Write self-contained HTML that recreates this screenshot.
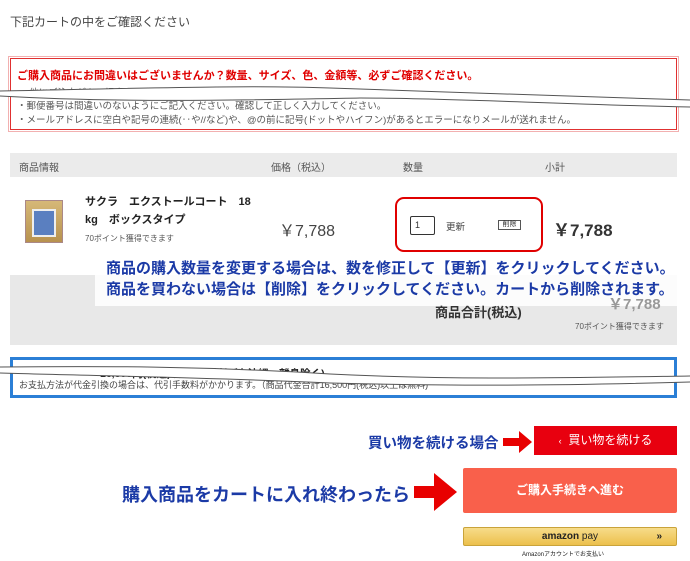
<!DOCTYPE html>
<html><head><meta charset="utf-8">
<style>
*{margin:0;padding:0;box-sizing:border-box}
body{width:690px;height:561px;background:#fff;position:relative;overflow:hidden;font-family:"Liberation Sans","Noto Sans CJK JP",sans-serif;color:#333}
.a{position:absolute;white-space:nowrap}
.blue{color:#1b3aa6;font-weight:bold}
</style></head><body>
<div class="a" style="left:10px;top:13px;font-size:12px;color:#444">下記カートの中をご確認ください</div>

<div class="a" style="left:10px;top:58px;width:667px;height:72px;border:1px solid #e03030;outline:1px solid #f2b0b0;outline-offset:1px"></div>
<div class="a" style="left:17px;top:67px;font-size:11px;font-weight:bold;color:#e00000">ご購入商品にお間違いはございませんか？数量、サイズ、色、金額等、必ずご確認ください。</div>
<div class="a" style="left:17px;top:85px;font-size:9.5px;color:#555">・ 他にご注文がある場合は<b style="color:#222">[買い物を続ける]</b>ボタンをクリックしてください。</div>
<div class="a" style="left:17px;top:98px;font-size:9.5px;color:#555">・郵便番号は間違いのないようにご記入ください。確認して正しく入力してください。</div>
<div class="a" style="left:17px;top:112px;font-size:9.5px;color:#555">・メールアドレスに空白や記号の連続(‥や//など)や、@の前に記号(ドットやハイフン)があるとエラーになりメールが送れません。</div>
<svg class="a" style="left:0;top:80px" width="690" height="34"><path d="M0 11 C150 8 250 5 330 8 C450 12 550 16 690 20 L690 27 C550 24 450 18 360 18 C250 20 120 23 0 16 Z" fill="#fff"/><path d="M0 11 C150 8 250 5 330 8 C450 12 550 16 690 20 M0 16 C120 23 250 20 360 18 C450 18 550 24 690 27" stroke="#555" fill="none"/></svg>

<div class="a" style="left:10px;top:153px;width:667px;height:24px;background:#ebebeb"></div>
<div class="a" style="left:19px;top:159px;font-size:10px;color:#555">商品情報</div>
<div class="a" style="left:271px;top:159px;font-size:10px;color:#555">価格（税込）</div>
<div class="a" style="left:403px;top:159px;font-size:10px;color:#555">数量</div>
<div class="a" style="left:545px;top:159px;font-size:10px;color:#555">小計</div>

<div class="a" style="left:25px;top:200px;width:38px;height:43px;background:linear-gradient(#d6b878,#b8924f);border:1px solid #a88"><div style="margin:8px 6px;height:28px;background:#5a7fc0;border:2px solid #eee"></div></div>
<div class="a" style="left:85px;top:193px;font-size:11px;font-weight:bold;color:#222">サクラ　エクストールコート　18</div>
<div class="a" style="left:85px;top:211px;font-size:11px;font-weight:bold;color:#222">kg　ボックスタイプ</div>
<div class="a" style="left:85px;top:233px;font-size:8px;color:#555">70ポイント獲得できます</div>
<div class="a" style="left:279px;top:217px;font-size:16px;color:#444">￥7,788</div>
<div class="a" style="left:395px;top:197px;width:148px;height:55px;border:2px solid #e00000;border-radius:9px"></div>
<div class="a" style="left:410px;top:216px;width:25px;height:19px;border:1px solid #333;border-radius:2px;font-size:9px;padding:3px 4px">1</div>
<div class="a" style="left:446px;top:219px;font-size:9.5px;color:#444">更新</div>
<div class="a" style="left:498px;top:220px;width:23px;height:10px;border:1px solid #555;font-size:7px;text-align:center;line-height:8px">削除</div>
<div class="a" style="left:553px;top:216px;font-size:17px;font-weight:bold;color:#333">￥7,788</div>

<div class="a" style="left:10px;top:275px;width:667px;height:70px;background:#e8e8e8"></div>
<div class="a" style="left:95px;top:258px;width:582px;height:48px;background:rgba(255,255,255,0.85)"></div>
<div class="a blue" style="left:106px;top:257px;font-size:15px">商品の購入数量を変更する場合は、数を修正して【更新】をクリックしてください。</div>
<div class="a blue" style="left:106px;top:278px;font-size:15px">商品を買わない場合は【削除】をクリックしてください。カートから削除されます。</div>
<div class="a" style="left:608px;top:293px;font-size:15px;color:#999;font-weight:bold">￥7,788</div>
<div class="a" style="left:435px;top:302px;font-size:13px;font-weight:bold;color:#333">商品合計(税込)</div>
<div class="a" style="left:575px;top:321px;font-size:8px;color:#555">70ポイント獲得できます</div>

<div class="a" style="left:10px;top:357px;width:667px;height:41px;border:3px solid #2b7fd6"></div>
<div class="a" style="left:100px;top:366px;font-size:10.5px;font-weight:bold;color:#222">16,500円(税込)以上は送料無料(沖縄・離島除く)</div>
<div class="a" style="left:19px;top:378px;font-size:9px;color:#444">お支払方法が代金引換の場合は、代引手数料がかかります。（商品代金合計16,500円(税込)以上は無料)</div>
<svg class="a" style="left:0;top:362px" width="690" height="30"><path d="M0 5 C100 4 200 4 330 12 C450 18 550 16 690 14 L690 20 C550 24 450 24 330 21 C200 15 100 14 0 11 Z" fill="#fff"/><path d="M0 5 C100 4 200 4 330 12 C450 18 550 16 690 14 M0 11 C100 14 200 15 330 21 C450 24 550 24 690 20" stroke="#555" fill="none"/></svg>

<div class="a blue" style="left:368px;top:432px;font-size:14.5px">買い物を続ける場合</div>
<svg class="a" style="left:503px;top:430px" width="30" height="24"><path d="M0 8 H16 V1 L29 12 L16 23 V16 H0 Z" fill="#e80000"/></svg>
<div class="a" style="left:534px;top:426px;width:143px;height:29px;background:#e8000f;color:#fff;font-size:12px;text-align:center;line-height:29px"><span style="font-size:9px">‹</span>&nbsp; 買い物を続ける</div>

<div class="a blue" style="left:122px;top:481px;font-size:18px">購入商品をカートに入れ終わったら</div>
<svg class="a" style="left:414px;top:473px" width="44" height="38"><path d="M0 13 H20 V0 L43 19 L20 38 V25 H0 Z" fill="#e80000"/></svg>
<div class="a" style="left:463px;top:468px;width:214px;height:45px;background:#f9604b;border-radius:2px;color:#fff;font-size:12px;font-weight:bold;text-align:center;line-height:45px">ご購入手続きへ進む</div>

<div class="a" style="left:463px;top:527px;width:214px;height:19px;background:linear-gradient(#f7dc8a,#ecc04c);border:1px solid #c9a33a;border-radius:2px;font-size:10px;text-align:center;line-height:17px;color:#222"><b>amazon</b> pay<span style="position:absolute;right:14px;font-weight:bold">»</span></div>
<div class="a" style="left:522px;top:549px;font-size:6px;color:#222">Amazonアカウントでお支払い</div>
</body></html>
